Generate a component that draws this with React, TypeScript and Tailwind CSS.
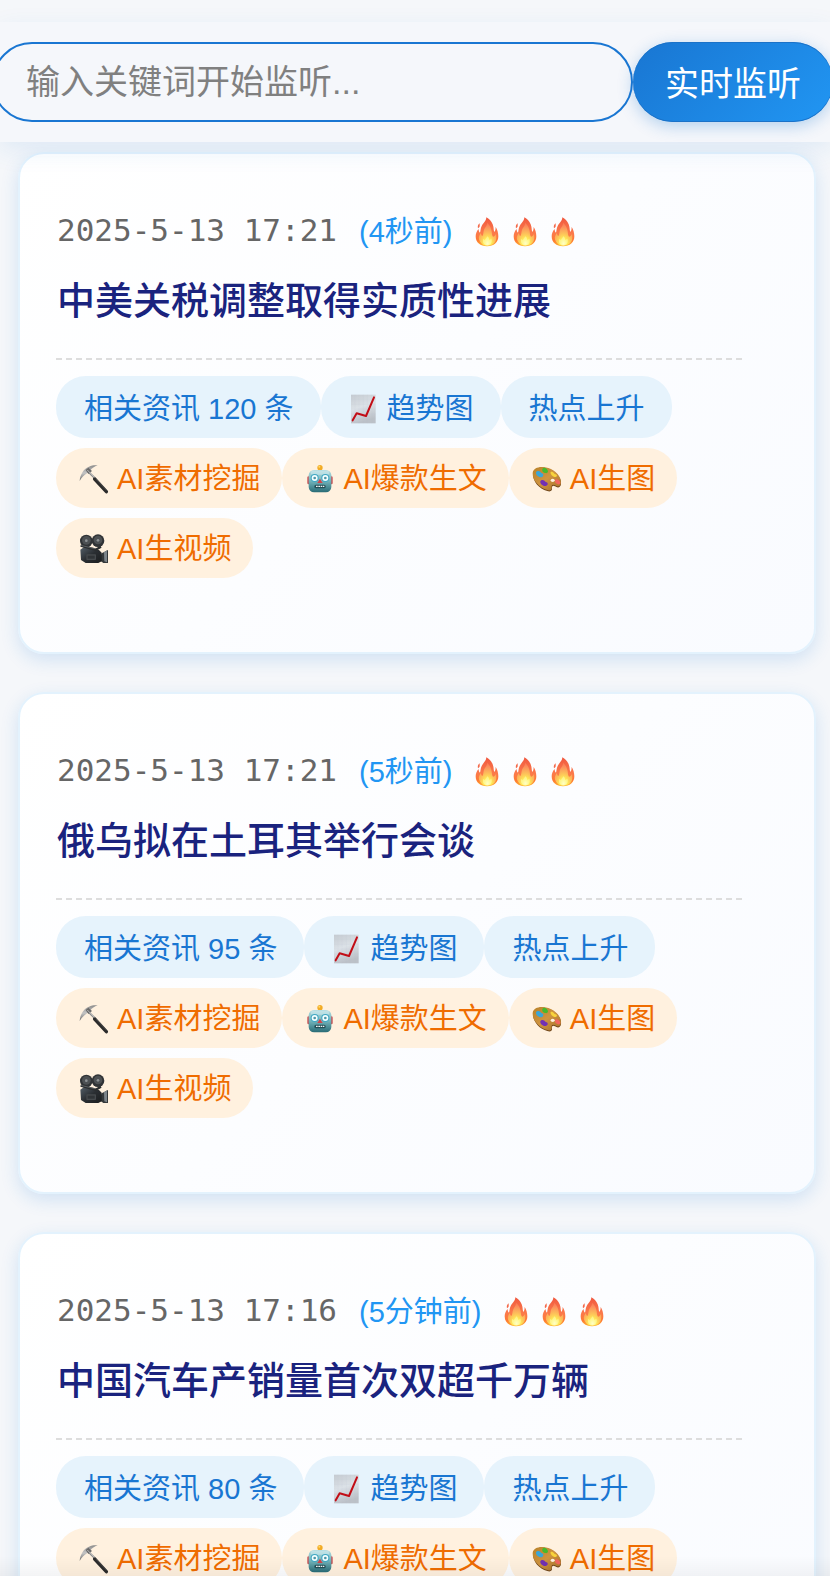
import type { ReactNode } from 'react';

type News = {
  time: string;
  ago: string;
  title: string;
  count: number;
};

const newsList: News[] = [
  { time: '2025-5-13 17:21', ago: '4秒前', title: '中美关税调整取得实质性进展', count: 120 },
  { time: '2025-5-13 17:21', ago: '5秒前', title: '俄乌拟在土耳其举行会谈', count: 95 },
  { time: '2025-5-13 17:16', ago: '5分钟前', title: '中国汽车产销量首次双超千万辆', count: 80 },
];

/* Gradients shared by every icon on the page. */
function IconDefs() {
  return (
    <svg className="absolute h-0 w-0" aria-hidden="true">
      <defs>
        <linearGradient id="flameOuter" x1="0" y1="0" x2="0" y2="1">
          <stop offset="0" stopColor="#f0583f" />
          <stop offset="0.55" stopColor="#fb7a4b" />
          <stop offset="0.8" stopColor="#ff7a33" />
          <stop offset="1" stopColor="#ffb52e" />
        </linearGradient>
        <radialGradient id="flameInner" cx="0.5" cy="0.9" r="0.85">
          <stop offset="0" stopColor="#ffffc8" />
          <stop offset="0.24" stopColor="#ffee55" />
          <stop offset="0.5" stopColor="#fdc25a" />
          <stop offset="0.85" stopColor="#fc8f5c" />
          <stop offset="1" stopColor="#fb7a55" />
        </radialGradient>
        <linearGradient id="paper" x1="0" y1="0" x2="0.3" y2="1">
          <stop offset="0" stopColor="#c4cad1" />
          <stop offset="0.5" stopColor="#dce2e7" />
          <stop offset="1" stopColor="#bcc1c8" />
        </linearGradient>
        <linearGradient id="steel" x1="0" y1="0" x2="0" y2="1">
          <stop offset="0" stopColor="#8c8c8c" />
          <stop offset="0.5" stopColor="#c4c4c4" />
          <stop offset="1" stopColor="#6b6b6b" />
        </linearGradient>
        <linearGradient id="robotFace" x1="0" y1="0" x2="0" y2="1">
          <stop offset="0" stopColor="#b5dde0" />
          <stop offset="0.5" stopColor="#72b3ba" />
          <stop offset="1" stopColor="#286b75" />
        </linearGradient>
        <linearGradient id="wood" x1="0" y1="0" x2="1" y2="1">
          <stop offset="0" stopColor="#b98228" />
          <stop offset="0.5" stopColor="#cf9440" />
          <stop offset="1" stopColor="#a56f28" />
        </linearGradient>
        <linearGradient id="cameraBody" x1="0" y1="0" x2="1" y2="1">
          <stop offset="0" stopColor="#55606a" />
          <stop offset="0.5" stopColor="#2b2f33" />
          <stop offset="1" stopColor="#1b1d1f" />
        </linearGradient>
      </defs>
    </svg>
  );
}

function Icon({ children }: { children: ReactNode }) {
  return (
    <svg viewBox="0 0 90 90" className="size-[30px] shrink-0" aria-hidden="true">
      {children}
    </svg>
  );
}

function Flame() {
  return (
    <Icon>
      <path
        fill="url(#flameOuter)"
        d="M43 1C43 12 34 17 29 27C25 35 26 42 24 47C21 45 20 41 20 36C14 42 11 50 11 58C11 77 25 88 45 88C66 88 79 76 79 58C79 47 76 38 71 30C71 37 70 42 67 45C64 38 66 31 62 22C58 12 51 5 43 1Z"
      />
      <path fill="#f4694a" d="M23 19C18 23 16 28 18 34C21 32 23 30 23 27Z" />
      <path
        fill="url(#flameInner)"
        d="M45 17C46 27 37 32 35 42C34 48 34 53 31 57C28 55 27 51 26 48C20 57 18 65 24 74C28 81 36 86 46 86C57 86 67 81 71 72C74 65 73 57 72 50C70 55 67 58 63 59C58 52 61 44 57 35C55 28 51 22 45 17Z"
      />
      <path
        fill="#ffffc0"
        fillOpacity="0.5"
        d="M46 58C43 63 41 66 38 69C36 68 35 67 34 65C31 73 33 84 46 84C58 84 62 74 58 65C56 67 54 68 52 69C51 64 50 61 46 58Z"
      />
    </Icon>
  );
}

function ChartIcon() {
  return (
    <Icon>
      <rect x="6" y="2" width="74" height="86" fill="url(#paper)" />
      <path
        d="M18 2V88M30 2V88M43 2V88M55 2V88M68 2V88M6 16H80M6 31H80M6 45H80M6 60H80M6 74H80"
        stroke="#b9c4ce"
        strokeOpacity="0.3"
        strokeWidth="1"
      />
      <path
        d="M11 79L23 58L51 66L75 10"
        fill="none"
        stroke="#c20d16"
        strokeWidth="6"
        strokeLinecap="round"
        strokeLinejoin="round"
      />
    </Icon>
  );
}

function PickIcon() {
  return (
    <Icon>
      <path d="M27 22L50 45" stroke="#8b8b8b" strokeWidth="6" />
      <path d="M47 45L82 83" stroke="#2b2b2b" strokeWidth="10" strokeLinecap="round" />
      <path d="M51 45L82 78" stroke="#5a5a5a" strokeWidth="2" strokeLinecap="round" />
      <path fill="url(#steel)" d="M2 51C3 33 13 14 30 8C38 4 48 3 56 4C46 8 39 12 34 19L24 28C15 34 8 41 2 51Z" />
      <path fill="#6a6a6a" d="M20 18L28 11L39 21L28 30Z" />
      <path d="M25 18L46 40" stroke="#c9c9c9" strokeWidth="2.5" />
    </Icon>
  );
}

function RobotIcon() {
  return (
    <Icon>
      <rect x="41" y="10" width="8" height="12" fill="#8a8f90" />
      <circle cx="45" cy="11" r="8" fill="#f2ab25" />
      <circle cx="43" cy="8" r="3" fill="#ffd867" />
      <rect x="7" y="37" width="10" height="24" rx="4" fill="#c74a4d" />
      <rect x="73" y="37" width="10" height="24" rx="4" fill="#c74a4d" />
      <rect x="11" y="18" width="68" height="67" rx="16" fill="url(#robotFace)" />
      <rect x="17" y="20" width="56" height="12" rx="6" fill="#cdeaec" fillOpacity="0.6" />
      <circle cx="29" cy="42" r="12" fill="#3fa7c4" />
      <circle cx="61" cy="42" r="12" fill="#3fa7c4" />
      <circle cx="29" cy="42" r="9" fill="#f4ffff" />
      <circle cx="61" cy="42" r="9" fill="#f4ffff" />
      <circle cx="29" cy="42" r="4" fill="#4e97a8" />
      <circle cx="61" cy="42" r="4" fill="#4e97a8" />
      <path d="M45 44L53 57H37Z" fill="#d2434a" />
      <rect x="28" y="62" width="34" height="11" rx="5" fill="#234e55" />
      <path d="M33 67H58" stroke="#f1f5f5" strokeWidth="4" strokeDasharray="5 2" />
    </Icon>
  );
}

function PaletteIcon() {
  return (
    <Icon>
      <path
        fill="#70461a"
        d="M3 30C4 13 24 7 46 13C71 20 89 42 87 60C86 71 77 73 69 67C63 63 59 66 60 73C61 81 55 84 46 81C21 75 2 51 3 30Z"
      />
      <path
        fill="url(#wood)"
        d="M2 28C3 11 24 6 46 11C71 18 89 39 87 57C86 68 77 70 69 64C62 60 58 63 59 70C60 78 54 81 46 78C21 72 1 48 2 28Z"
      />
      <ellipse cx="62" cy="49" rx="6" ry="5" fill="#fff1df" />
      <path fill="#3aa6d8" d="M12 25C15 18 25 20 28 27C36 28 36 38 28 40C20 41 11 33 12 25Z" />
      <path fill="#45b92f" d="M31 16C34 8 44 12 46 18C51 23 46 29 40 27C34 28 29 21 31 16Z" />
      <path fill="#f8d43c" d="M56 24C61 21 65 26 68 30C76 31 77 37 71 39C63 40 54 31 56 24Z" />
      <path fill="#7130b4" d="M25 52C29 45 37 48 41 54C48 55 50 62 43 65C36 70 23 60 25 52Z" />
      <path fill="#f2655e" d="M70 47C75 43 82 48 85 55C86 61 80 63 76 60C70 58 67 52 70 47Z" />
    </Icon>
  );
}

function CameraIcon() {
  return (
    <Icon>
      <path d="M68 58L87 48V87H73L60 77Z" fill="#34383b" />
      <path d="M75 55L84 49V85L76 82Z" fill="#7c848a" />
      <path d="M4 47L16 38L60 48L68 56V82L58 87H20L6 78Z" fill="url(#cameraBody)" />
      <rect x="22" y="61" width="29" height="17" rx="2" fill="#45494c" />
      <rect x="26" y="65" width="21" height="9" fill="#303437" />
      <circle cx="22" cy="21" r="19" fill="#303336" />
      <circle cx="57" cy="20" r="19" fill="#303336" />
      <circle cx="22" cy="19" r="13" fill="#4c5053" />
      <circle cx="57" cy="18" r="13" fill="#4c5053" />
      <circle cx="22" cy="20" r="4" fill="#8c9194" />
      <circle cx="57" cy="19" r="4" fill="#8c9194" />
      <path d="M5 35L50 47L66 38" fill="none" stroke="#2b2e30" strokeWidth="7" />
      <path d="M5 34L48 44" stroke="#74797c" strokeWidth="2" />
    </Icon>
  );
}

function InfoPill({ children }: { children: ReactNode }) {
  return (
    <button
      type="button"
      className="flex items-center gap-2 rounded-[30px] bg-[#e6f3fc] pt-[11px] pr-[27px] pb-[7px] pl-7 text-[29px] leading-[44px] whitespace-pre text-[#1976d2]"
    >
      {children}
    </button>
  );
}

function ToolPill({ children }: { children: ReactNode }) {
  return (
    <button
      type="button"
      className="flex items-center gap-2 rounded-[30px] bg-[#fff1df] pt-[9px] pr-[22px] pb-[7px] pl-[23px] text-[29px] leading-[44px] text-[#ef6c00]"
    >
      {children}
    </button>
  );
}

function NewsCard({ item }: { item: News }) {
  return (
    <article className="rounded-[26px] border-2 border-[#e3f2fd] bg-linear-135 from-white to-[#f9fbff] pt-[56px] pr-[72px] pb-[74px] pl-9 shadow-[0_6px_18px_rgba(25,118,210,0.16)]">
      <div className="pl-px">
        <div className="flex items-start leading-10">
          <time className="font-['DejaVu_Sans_Mono',monospace] text-[31px] text-[#666666]">{item.time}</time>
          <div className="flex items-center gap-5 pt-[2px] pl-[22px]">
            <span className="text-[29px] text-[#2196f3]">({item.ago})</span>
            <span className="flex gap-2" role="img" aria-label="热度三级">
              <Flame />
              <Flame />
              <Flame />
            </span>
          </div>
        </div>
        <h2 className="mt-[21px] text-[38px] leading-[56px] font-medium text-[#1a237e]">{item.title}</h2>
      </div>
      <div className="mt-[29px] flex flex-col gap-[10px] border-t-2 border-dashed border-[#dddddd] pt-4">
        <div className="flex flex-wrap gap-y-[10px]">
          <InfoPill>相关资讯 {item.count} 条</InfoPill>
          <InfoPill>
            <ChartIcon />
            趋势图
          </InfoPill>
          <InfoPill>热点上升</InfoPill>
        </div>
        <div className="flex flex-wrap gap-y-[10px]">
          <ToolPill>
            <PickIcon />
            AI素材挖掘
          </ToolPill>
          <ToolPill>
            <RobotIcon />
            AI爆款生文
          </ToolPill>
          <ToolPill>
            <PaletteIcon />
            AI生图
          </ToolPill>
          <ToolPill>
            <CameraIcon />
            AI生视频
          </ToolPill>
        </div>
      </div>
    </article>
  );
}

export default function App() {
  return (
    <div className="h-screen overflow-hidden bg-[#f5f7fa] pt-[22px] font-['Liberation_Sans','Noto_Sans_CJK_SC',sans-serif]">
      <IconDefs />
      <header className="relative z-10 bg-[#f5f7fb] py-5 shadow-[0_8px_24px_rgba(25,118,210,0.1)]">
        <form className="-mr-[3px] -ml-2 flex" onSubmit={(event) => event.preventDefault()}>
          <input
            type="text"
            aria-label="关键词"
            placeholder="输入关键词开始监听..."
            className="h-20 min-w-0 flex-1 rounded-full border-2 border-[#1976d2] bg-transparent px-8 text-[34px] text-[#333333] outline-none placeholder:text-[#808080]"
          />
          <button
            type="submit"
            className="h-20 shrink-0 rounded-full bg-linear-135 from-[#1976d2] to-[#2196f3] px-8 pt-1 text-[34px] text-white shadow-[0_4px_16px_rgba(25,118,210,0.3),inset_0_1px_0_#1b72c8,inset_0_-1px_0_#1b72c8]"
          >
            实时监听
          </button>
        </form>
      </header>
      <main className="flex flex-col gap-[38px] px-[18px] pt-[10px] pr-[14px] pb-10">
        {newsList.map((item) => (
          <NewsCard key={item.title} item={item} />
        ))}
      </main>
      <div className="pointer-events-none fixed inset-x-0 bottom-0 z-20 h-5 bg-linear-to-b from-transparent to-black/4" />
    </div>
  );
}
